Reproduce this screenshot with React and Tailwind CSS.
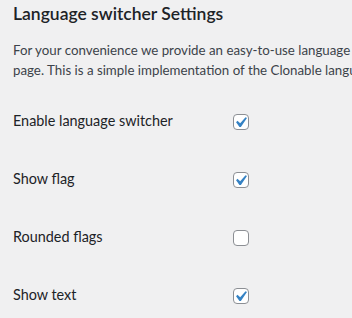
import React from 'react';

const rows = [
  { label: 'Enable language switcher', checked: true },
  { label: 'Show flag', checked: true },
  { label: 'Rounded flags', checked: false },
  { label: 'Show text', checked: true },
];

const Checkbox = ({ checked }) => (
  <span className="relative block w-4 h-4 rounded-[4px] border border-[#8c8f94] bg-white">
    {checked && (
      <svg
        className="absolute left-[-4px] top-[-3px] w-[21px] h-[21px]"
        viewBox="0 0 20 20"
      >
        <path d="M14.83 4.89l1.34.94-5.81 8.38H9.02L5.78 9.67l1.34-1.25 2.57 2.4z" fill="#3582c4" />
      </svg>
    )}
  </span>
);

export default function App() {
  return (
    <div
      className="w-[352px] h-[318px] overflow-hidden bg-[#f0f0f1] pl-[13px] text-[#1d2327]"
      style={{ fontFamily: 'Lato, "Noto Sans", sans-serif' }}
    >
      <h2 className="pt-[3px] text-[17.5px] leading-[22px] font-semibold whitespace-nowrap">
        Language switcher Settings
      </h2>
      <p className="mt-[15px] text-[13.3px] leading-[20px] text-[#3c434a] whitespace-nowrap">
        For your convenience we provide an easy-to-use language switcher for your
        <br />
        page. This is a simple implementation of the Clonable language switcher.
      </p>
      <div className="mt-[12px]">
        {rows.map((row) => (
          <div key={row.label} className="grid grid-cols-[220px_auto] items-center h-[58px]">
            <span className="text-[14.4px] leading-[20px] whitespace-nowrap">{row.label}</span>
            <span className="pt-[2px]">
              <Checkbox checked={row.checked} />
            </span>
          </div>
        ))}
      </div>
    </div>
  );
}
